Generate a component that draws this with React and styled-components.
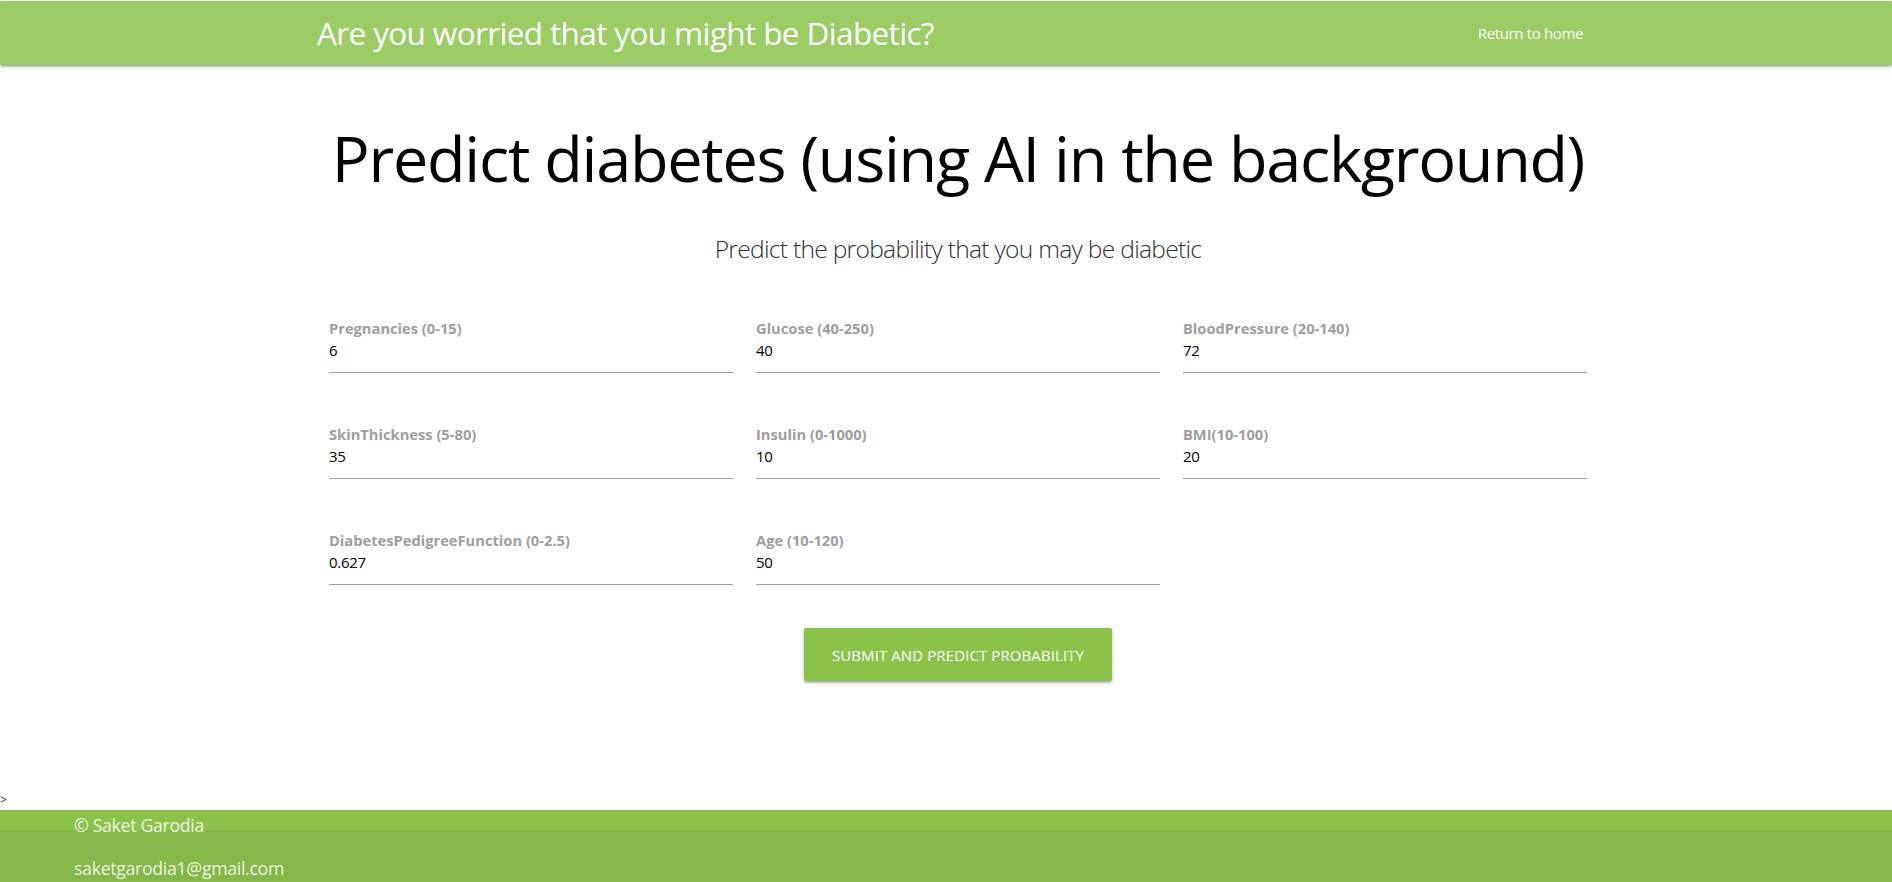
import React from "react";
import styled, { createGlobalStyle } from "styled-components";

const GlobalStyle = createGlobalStyle`
  html, body {
    margin: 0;
    padding: 0;
    background: #fff;
  }
  body {
    font-family: "Open Sans", "Noto Sans", "Liberation Sans", sans-serif;
    color: rgba(0, 0, 0, 0.87);
  }
  * { box-sizing: border-box; }
`;

const fields = [
  { label: "Pregnancies (0-15)", value: "6" },
  { label: "Glucose (40-250)", value: "40" },
  { label: "BloodPressure (20-140)", value: "72" },
  { label: "SkinThickness (5-80)", value: "35" },
  { label: "Insulin (0-1000)", value: "10" },
  { label: "BMI(10-100)", value: "20" },
  { label: "DiabetesPedigreeFunction (0-2.5)", value: "0.627" },
  { label: "Age (10-120)", value: "50" },
];

const Page = styled.div`
  min-height: 882px;
  padding-top: 1px;
  background: #fff;
`;

const Nav = styled.nav`
  height: 64px;
  background: #9ccc65;
  box-shadow: 0 2px 2px 0 rgba(0, 0, 0, 0.14), 0 3px 1px -2px rgba(0, 0, 0, 0.12),
    0 1px 5px 0 rgba(0, 0, 0, 0.2);
`;

const NavInner = styled.div`
  width: 1281px;
  margin-left: 317px;
  display: flex;
  justify-content: space-between;
  align-items: center;
  height: 64px;
  line-height: 64px;
  color: #fff;
`;

const Brand = styled.a`
  font-size: 31.5px;
  letter-spacing: -0.02em;
  color: #fff;
  text-decoration: none;
  white-space: nowrap;
`;

const NavLink = styled.a`
  font-size: 15px;
  letter-spacing: -0.024em;
  color: #fff;
  text-decoration: none;
  padding: 0 15px;
`;

const Main = styled.main`
  width: 1258px;
  margin-left: 329px;
  display: flex;
  flex-direction: column;
  align-items: center;
`;

const Heading = styled.h1`
  margin: 58px 0 0;
  font-size: 63px;
  line-height: 1.1;
  font-weight: 400;
  letter-spacing: -0.02em;
  color: #000;
  white-space: nowrap;
`;

const Subtitle = styled.h5`
  margin: 43px 0 0;
  font-size: 24.6px;
  line-height: 27px;
  font-weight: 300;
  letter-spacing: -0.029em;
  color: #333;
  white-space: nowrap;
`;

const FieldGrid = styled.form`
  width: 100%;
  margin-top: 57px;
  display: grid;
  grid-template-columns: repeat(3, 404px);
  column-gap: 23px;
  row-gap: 52px;
`;

const Field = styled.label`
  display: flex;
  flex-direction: column;
  padding-bottom: 11px;
  border-bottom: 1px solid #9e9e9e;
`;

const FieldLabel = styled.span`
  font-size: 14.7px;
  line-height: 18px;
  font-weight: 700;
  color: #9e9e9e;
  white-space: nowrap;
`;

const FieldValue = styled.span`
  margin-top: 2px;
  font-size: 15px;
  line-height: 22px;
  letter-spacing: -0.02em;
  color: #000;
`;

const SubmitButton = styled.button`
  margin-top: 43px;
  height: 53px;
  padding: 0 28px;
  border: none;
  border-radius: 2px;
  background: #8bc34a;
  color: #fff;
  font-family: inherit;
  font-size: 15px;
  letter-spacing: 0.1px;
  text-transform: uppercase;
  cursor: pointer;
  box-shadow: 0 2px 2px 0 rgba(0, 0, 0, 0.14), 0 3px 1px -2px rgba(0, 0, 0, 0.12),
    0 1px 5px 0 rgba(0, 0, 0, 0.2);
`;

const Stray = styled.div`
  margin-top: 112px;
  height: 14px;
  font-size: 12px;
  line-height: 14px;
  color: #333;
`;

const Footer = styled.footer`
  margin-top: 3px;
  padding: 4px 0 20px 74px;
  background: linear-gradient(#8bc34a 0, #8bc34a 20px, #84b848 20px);
  color: rgba(255, 255, 255, 0.85);
  font-size: 17.8px;
  letter-spacing: -0.02em;
  display: flex;
  flex-direction: column;
  gap: 21px;
`;

const FooterLine = styled.div`
  line-height: 22px;
`;

export default function App() {
  return (
    <Page>
      <GlobalStyle />
      <Nav>
        <NavInner>
          <Brand href="#">Are you worried that you might be Diabetic?</Brand>
          <NavLink href="#">Return to home</NavLink>
        </NavInner>
      </Nav>

      <Main>
        <Heading>Predict diabetes (using AI in the background)</Heading>
        <Subtitle>Predict the probability that you may be diabetic</Subtitle>

        <FieldGrid onSubmit={(e) => e.preventDefault()}>
          {fields.map((f) => (
            <Field key={f.label}>
              <FieldLabel>{f.label}</FieldLabel>
              <FieldValue>{f.value}</FieldValue>
            </Field>
          ))}
        </FieldGrid>

        <SubmitButton type="button">Submit and predict probability</SubmitButton>
      </Main>

      <Stray>&gt;</Stray>

      <Footer>
        <FooterLine>© Saket Garodia</FooterLine>
        <FooterLine>saketgarodia1@gmail.com</FooterLine>
      </Footer>
    </Page>
  );
}
